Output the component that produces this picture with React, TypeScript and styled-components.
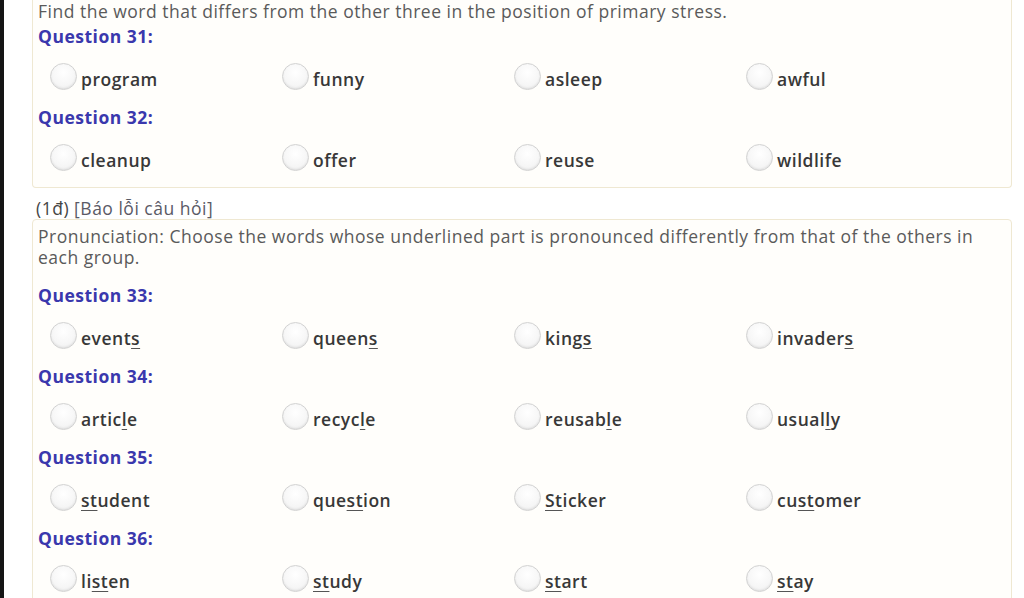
import React from 'react';
import styled, { createGlobalStyle } from 'styled-components';

const GlobalStyle = createGlobalStyle`
  html, body {
    margin: 0;
    padding: 0;
    background: #ffffff;
  }
  body {
    font-family: "Open Sans", Lato, sans-serif;
    color: #555555;
  }
`;

const Page = styled.div`
  width: 1024px;
  height: 598px;
  overflow: hidden;
  box-sizing: border-box;
  border-left: 4px solid #151515;
  padding: 0 12px 0 28px;
  background: #ffffff;
`;

const Card = styled.div<{ $clipped?: boolean }>`
  box-sizing: border-box;
  border: 1px solid #efe8d2;
  border-top: ${(p) => (p.$clipped ? 'none' : '1px solid #efe8d2')};
  border-radius: ${(p) => (p.$clipped ? '0 0 4px 4px' : '4px')};
  background: #fffefb;
  padding: ${(p) => (p.$clipped ? '1px 5px 0' : '6px 5px 0')};
`;

const Instruction = styled.div<{ $gap: number }>`
  font-size: 17.5px;
  letter-spacing: 0.5px;
  line-height: 21px;
  color: #5a5a5a;
  margin-bottom: ${(p) => p.$gap}px;
`;

const ScoreLine = styled.div`
  margin-top: 10px;
  font-size: 17.5px;
  letter-spacing: 0.5px;
  line-height: 21px;
  color: #454545;
  padding-left: 4px;
`;

const ReportLink = styled.span`
  color: #5a5a66;
`;

const QuestionLabel = styled.div`
  font-size: 17.5px;
  letter-spacing: 0.5px;
  line-height: 22px;
  font-weight: 700;
  color: #3a38ad;
`;

const OptionsRow = styled.div`
  display: grid;
  grid-template-columns: repeat(4, 232px);
  height: 40px;
  margin: 12px 0 7px 12px;
  align-items: center;
`;

const Option = styled.label`
  display: flex;
  align-items: center;
  gap: 4px;
  font-size: 17.5px;
  letter-spacing: 0.5px;
  font-weight: 600;
  color: #383838;
`;

const Radio = styled.span`
  box-sizing: border-box;
  width: 27px;
  height: 27px;
  border-radius: 50%;
  border: 1px solid #d2d2d2;
  background: radial-gradient(circle at 50% 35%, #ffffff 0%, #f6f6f6 60%, #ececec 100%);
  box-shadow: inset 0 -1px 2px rgba(0, 0, 0, 0.08);
  transform: translateY(-3px);
  flex-shrink: 0;
`;

const Word = styled.span`
  u {
    text-decoration-thickness: 1px;
    text-underline-offset: 3px;
    text-decoration-color: #555;
  }
`;

type Q = { n: number; options: React.ReactNode[] };

const card1: Q[] = [
  { n: 31, options: ['program', 'funny', 'asleep', 'awful'] },
  { n: 32, options: ['cleanup', 'offer', 'reuse', 'wildlife'] },
];

const card2: Q[] = [
  {
    n: 33,
    options: [
      <>event<u>s</u></>,
      <>queen<u>s</u></>,
      <>king<u>s</u></>,
      <>invader<u>s</u></>,
    ],
  },
  {
    n: 34,
    options: [
      <>artic<u>l</u>e</>,
      <>recyc<u>l</u>e</>,
      <>reusab<u>l</u>e</>,
      <>usual<u>l</u>y</>,
    ],
  },
  {
    n: 35,
    options: [
      <><u>st</u>udent</>,
      <>que<u>st</u>ion</>,
      <><u>St</u>icker</>,
      <>cu<u>st</u>omer</>,
    ],
  },
  {
    n: 36,
    options: [
      <>li<u>st</u>en</>,
      <><u>st</u>udy</>,
      <><u>st</u>art</>,
      <><u>st</u>ay</>,
    ],
  },
];

const Question: React.FC<{ q: Q }> = ({ q }) => (
  <>
    <QuestionLabel>Question {q.n}:</QuestionLabel>
    <OptionsRow>
      {q.options.map((o, i) => (
        <Option key={i}>
          <Radio />
          <Word>{o}</Word>
        </Option>
      ))}
    </OptionsRow>
  </>
);

const App: React.FC = () => (
  <>
    <GlobalStyle />
    <Page>
      <Card $clipped>
        <Instruction $gap={3}>
          Find the word that differs from the other three in the position of primary stress.
        </Instruction>
        {card1.map((q) => (
          <Question key={q.n} q={q} />
        ))}
      </Card>
      <ScoreLine>
        (1đ) <ReportLink>[Báo lỗi câu hỏi]</ReportLink>
      </ScoreLine>
      <Card>
        <Instruction $gap={16}>
          Pronunciation: Choose the words whose underlined part is pronounced differently from that of the
          others in each group.
        </Instruction>
        {card2.map((q) => (
          <Question key={q.n} q={q} />
        ))}
      </Card>
    </Page>
  </>
);

export default App;
